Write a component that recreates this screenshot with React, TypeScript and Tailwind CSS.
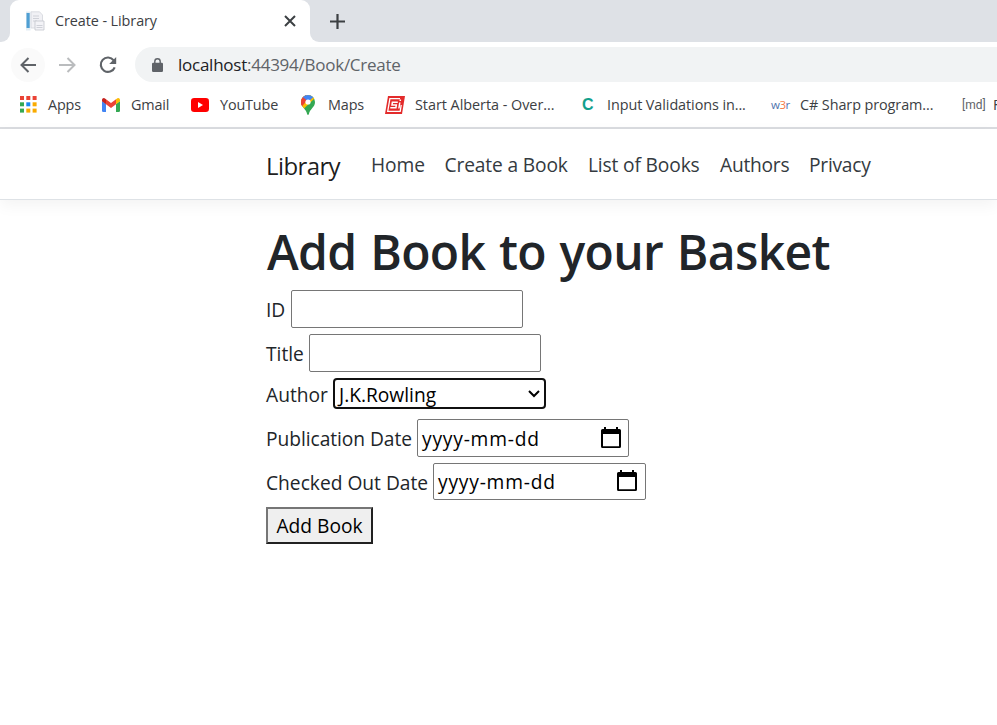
import React from "react";

function FileIcon() {
  return (
    <svg width="20" height="20" viewBox="0 0 20 20" className="shrink-0">
      <path d="M1 .5h4.500v19H1z" fill="#e3edf4" />
      <path d="M1.500 2h3.200v15H1.500z" fill="#4f9fd3" />
      <path d="M6 .8h8.500L17.500 4v13H6z" fill="#f1f1f5" stroke="#d3d5dc" strokeWidth=".8" />
      <path d="M8 5h6M8 7.500h6M8 10h4" stroke="#cfd1d8" />
      <path d="M10 10h9v9h-9z" fill="#f3f3f7" stroke="#c3c5cd" strokeWidth=".8" />
      <path d="M11.500 14.500h6M11.500 16.500h6" stroke="#cfd1d8" />
    </svg>
  );
}

function AppsIcon() {
  const colors = ["#ea4335", "#ea4335", "#ea4335", "#34a853", "#1a88f0", "#f9ab00", "#34a853", "#f9ab00", "#f9ab00"];
  return (
    <svg width="17" height="17" viewBox="0 0 17 17" className="shrink-0">
      {colors.map((c, i) => (
        <rect key={i} x={(i % 3) * 6.3} y={Math.floor(i / 3) * 6.3} width="4" height="4" fill={c} />
      ))}
    </svg>
  );
}

function GmailIcon() {
  return (
    <svg width="18" height="14" viewBox="0 0 18 14" className="shrink-0">
      <path d="M0 3v9.700Q0 14 1.300 14H4V6z" fill="#4285f4" />
      <path d="M18 3v9.700q0 1.300-1.300 1.300H14V6z" fill="#34a853" />
      <path d="M4 1.300 9 5l5-3.700v5L9 10 4 6.300z" fill="#ea4335" />
      <path d="M0 2C0 .2 2 -.6 3.300.7L4 1.300v5L0 3.300z" fill="#c5221f" />
      <path d="M18 2c0-1.800-2-2.600-3.300-1.300l-.7.6v5l4-3z" fill="#fbbc04" />
    </svg>
  );
}

function YouTubeIcon() {
  return (
    <svg width="18" height="14" viewBox="0 0 18 14" className="shrink-0">
      <rect width="18" height="14" rx="3.200" fill="#f00" />
      <path d="m7 4 5 3-5 3z" fill="#fff" />
    </svg>
  );
}

function MapsIcon() {
  return (
    <svg width="14" height="20" viewBox="0 0 14 20" className="shrink-0">
      <clipPath id="pin">
        <path d="M7 0a7 7 0 0 0-7 7c0 2.500 1 4 2.500 5.800C4.500 15.200 5.500 16.500 6.100 19q.9 2 1.800 0c.6-2.500 1.600-3.800 3.600-6.200C13 11 14 9.500 14 7a7 7 0 0 0-7-7" />
      </clipPath>
      <g clipPath="url(#pin)">
        <path d="M0 0h14v20H0z" fill="#34a853" />
        <path d="M14 0v3L2.500 14 0 10V0z" fill="#fbbc04" />
        <path d="M0 0h5v5L0 12z" fill="#ea4335" />
        <path d="M1.500 2.500 7 7l6-5.500L10 0H3z" fill="#4285f4" />
        <path d="m0 4 1.700-2L6 5.500 1.300 11 0 10z" fill="#ea4335" />
      </g>
      <circle cx="7" cy="7" r="2.600" fill="#fff" />
    </svg>
  );
}

function StartIcon() {
  return (
    <svg width="20" height="18" viewBox="0 0 20 18" className="shrink-0">
      <path d="M3 0h17l-3 18H0z" fill="#e32b2b" />
      <path d="M15 2.600H4.900L2.700 15.400h12.500L16.200 9" fill="none" stroke="#fff" strokeWidth="1.300" />
      <path d="M12.800 6.200H7.400L7 8.900h4.300l-.4 2.900H5.300M14.800 6.500l-.9 6M15.300 3.500v1.500" fill="none" stroke="#fff" strokeWidth="1.500" />
    </svg>
  );
}

function Calendar() {
  return (
    <svg width="20" height="22" viewBox="0 0 20 22" className="shrink-0">
      <path d="M3 0h2v2h10V0h2v2h1.500Q20 2 20 3.500v16q0 1.500-1.500 1.500h-17Q0 21 0 19.500v-16Q0 2 1.500 2H3zM2 7v12.200h16V7z" fill="#000" fillRule="evenodd" />
    </svg>
  );
}

function DateBox({ className }: { className: string }) {
  return (
    <div className={`flex items-center justify-between rounded-[2px] border border-[#767676] bg-white pl-[4px] text-black ${className}`}>
      <span className="pt-[2px] tracking-[0.8px]">yyyy-mm-dd</span>
      <Calendar />
    </div>
  );
}

function Browser() {
  return (
    <div className="text-[#3c4043]">
      <div className="flex h-[42px] bg-[#dee1e6]">
        <div className="flex w-[10px] bg-white">
          <div className="w-full rounded-br-[9px] bg-[#dee1e6]" />
        </div>
        <div className="flex w-[300px] items-center rounded-t-[9px] bg-white pl-[15px] pr-[14px]">
          <FileIcon />
          <span className="ml-[10px] flex-1 text-[14.400px] tracking-[-0.08px]">Create - Library</span>
          <svg width="12" height="12" viewBox="0 0 12 12">
            <path d="m1 1 10 10M11 1 1 11" stroke="#3c4043" strokeWidth="2" />
          </svg>
        </div>
        <div className="flex flex-1 bg-white">
          <div className="flex flex-1 items-center rounded-bl-[9px] bg-[#dee1e6] pl-[20px]">
            <svg width="15" height="15" viewBox="0 0 15 15">
              <path d="M7.500 0v15M0 7.500h15" stroke="#3c4043" strokeWidth="2.200" />
            </svg>
          </div>
        </div>
      </div>
      <div className="flex h-[45px] items-center pl-[11px]">
        <div className="flex size-[34px] items-center justify-center rounded-full bg-[#fafafa]">
          <svg width="16" height="16" viewBox="0 0 16 16" fill="none" stroke="#5f6368" strokeWidth="2">
            <path d="M16 8H1.500M8.500 1l-7 7 7 7" />
          </svg>
        </div>
        <svg className="ml-[14px]" width="17" height="16" viewBox="0 0 17 16" fill="none" stroke="#babcbe" strokeWidth="2">
          <path d="M0 8h15.500M8.500 1l7 7-7 7" />
        </svg>
        <svg className="ml-[23px]" width="18" height="18" viewBox="0 0 18 18">
          <path d="M14.700 4.300A7.200 7.200 0 1 0 15.700 11.300" fill="none" stroke="#5f6368" strokeWidth="2.200" />
          <path d="M17.200 1v7H10.200z" fill="#5f6368" />
        </svg>
        <div className="ml-[18px] flex h-[35px] flex-1 items-center rounded-l-full bg-[#f1f3f4] pl-[17px] text-[17px]">
          <svg width="11" height="14" viewBox="0 0 11 14">
            <path d="M1.200 4.800h8.600Q11 4.800 11 6v6.800q0 1.200-1.200 1.200H1.200Q0 14 0 12.800V6q0-1.200 1.200-1.200" fill="#5f6368" />
            <path d="M2.800 5.500V3.400a2.700 2.700 0 0 1 5.400 0v2.100" fill="none" stroke="#5f6368" strokeWidth="1.400" />
          </svg>
          <span className="ml-[15px] font-[370] tracking-[-0.25px] text-[#5f6368]">
            <span className="text-[#202124]">localhost</span>:44394/Book/Create
          </span>
        </div>
      </div>
      <div className="flex h-[42px] items-center overflow-hidden whitespace-nowrap border-b-2 border-[#dadce0] pb-[5px] pl-[20px] text-[14.400px] tracking-[-0.15px]">
        <AppsIcon />
        <span className="ml-[11px] w-[54px] shrink-0">Apps</span>
        <GmailIcon />
        <span className="ml-[11px] w-[60px] shrink-0">Gmail</span>
        <YouTubeIcon />
        <span className="ml-[11px] w-[81px] shrink-0">YouTube</span>
        <MapsIcon />
        <span className="ml-[13px] w-[57px] shrink-0">Maps</span>
        <StartIcon />
        <span className="ml-[10px] w-[167px] shrink-0 tracking-[-0.03px]">Start Alberta - Over...</span>
        <span className="w-[25px] shrink-0 font-['Liberation_Sans'] text-[16px] font-bold leading-none text-[#12a08c]">C</span>
        <span className="w-[164px] shrink-0 tracking-[-0.08px]">Input Validations in...</span>
        <span className="w-[29px] shrink-0 text-[11.500px] tracking-[-0.5px] text-[#4f74ad]">
          w<span className="text-[#f47b45]">3</span>r
        </span>
        <span className="w-[162px] shrink-0 tracking-[-0.08px]">C# Sharp program...</span>
        <span className="w-[31px] shrink-0 font-['Roboto'] text-[12px] tracking-[0px] text-[#5f6368]">[md]</span>
        <span>F</span>
      </div>
    </div>
  );
}

export default function App() {
  return (
    <div className="h-[725px] w-full overflow-hidden whitespace-nowrap bg-white font-['Open_Sans',sans-serif]">
      <Browser />
      <nav className="flex h-[71px] items-center border-b border-[#dee2e6] pl-[266px] pt-[3px] text-[19.200px] font-[370] text-[#343a40] shadow-[0_5px_15px_rgba(0,0,0,0.05)]">
        <span className="w-[105px] text-[24px] tracking-[-0.6px] text-black/90">Library</span>
        <span className="w-[73.500px] tracking-[-0.1px]">Home</span>
        <span className="w-[143.500px] tracking-[-0.15px]">Create a Book</span>
        <span className="w-[132px] tracking-[-0.15px]">List of Books</span>
        <span className="w-[89px] tracking-[-0.25px]">Authors</span>
        <span className="tracking-[-0.25px]">Privacy</span>
      </nav>
      <main className="pl-[266px] pt-[20px] text-[19.200px] font-[370] text-[#212529]">
        <h1 className="h-[70px] pl-[1px] pt-[1px] text-[48px] font-semibold leading-[62px] tracking-[-0.65px] [word-spacing:1.8px]">Add Book to your Basket</h1>
        <form className="flex flex-col">
          <label className="flex h-[38px] items-center">
            <span className="w-[25px] pt-[2px]">ID</span>
            <input className="h-[38px] w-[232px] rounded-[2px] border border-[#767676] bg-white" />
          </label>
          <label className="mt-[6px] flex h-[38px] items-center">
            <span className="w-[43px] pt-[2px]">Title</span>
            <input className="h-[38px] w-[232px] rounded-[2px] border border-[#767676] bg-white" />
          </label>
          <div className="mt-[6px] flex h-[31px] items-center">
            <span className="w-[67px] pt-[3px]">Author</span>
            <div className="flex h-[31px] w-[213px] items-center justify-between rounded-[4px] border-2 border-[#101010] pl-[4px] pr-[4px] text-black">
              <span className="pt-[3px]">J.K.Rowling</span>
              <svg width="12" height="8" viewBox="0 0 12 8">
                <path d="m1 1 5 5 5-5" fill="none" stroke="#000" strokeWidth="2" />
              </svg>
            </div>
          </div>
          <div className="mt-[10px] flex h-[38px] items-center">
            <span className="w-[151px] pt-[2px] tracking-[-0.05px]">Publication Date</span>
            <DateBox className="h-[38px] w-[212px] pr-[7px]" />
          </div>
          <div className="mt-[6px] flex h-[37px] items-center">
            <span className="w-[167px] pt-[3px]">Checked Out Date</span>
            <DateBox className="h-[37px] w-[213px] pb-[1px] pr-[8px]" />
          </div>
          <button type="button" className="mt-[7px] h-[37px] w-[107px] border-2 border-[#212121] border-l-[#767676] border-t-[#767676] bg-[#efefef] pt-[2px] text-black">
            Add Book
          </button>
        </form>
      </main>
    </div>
  );
}
